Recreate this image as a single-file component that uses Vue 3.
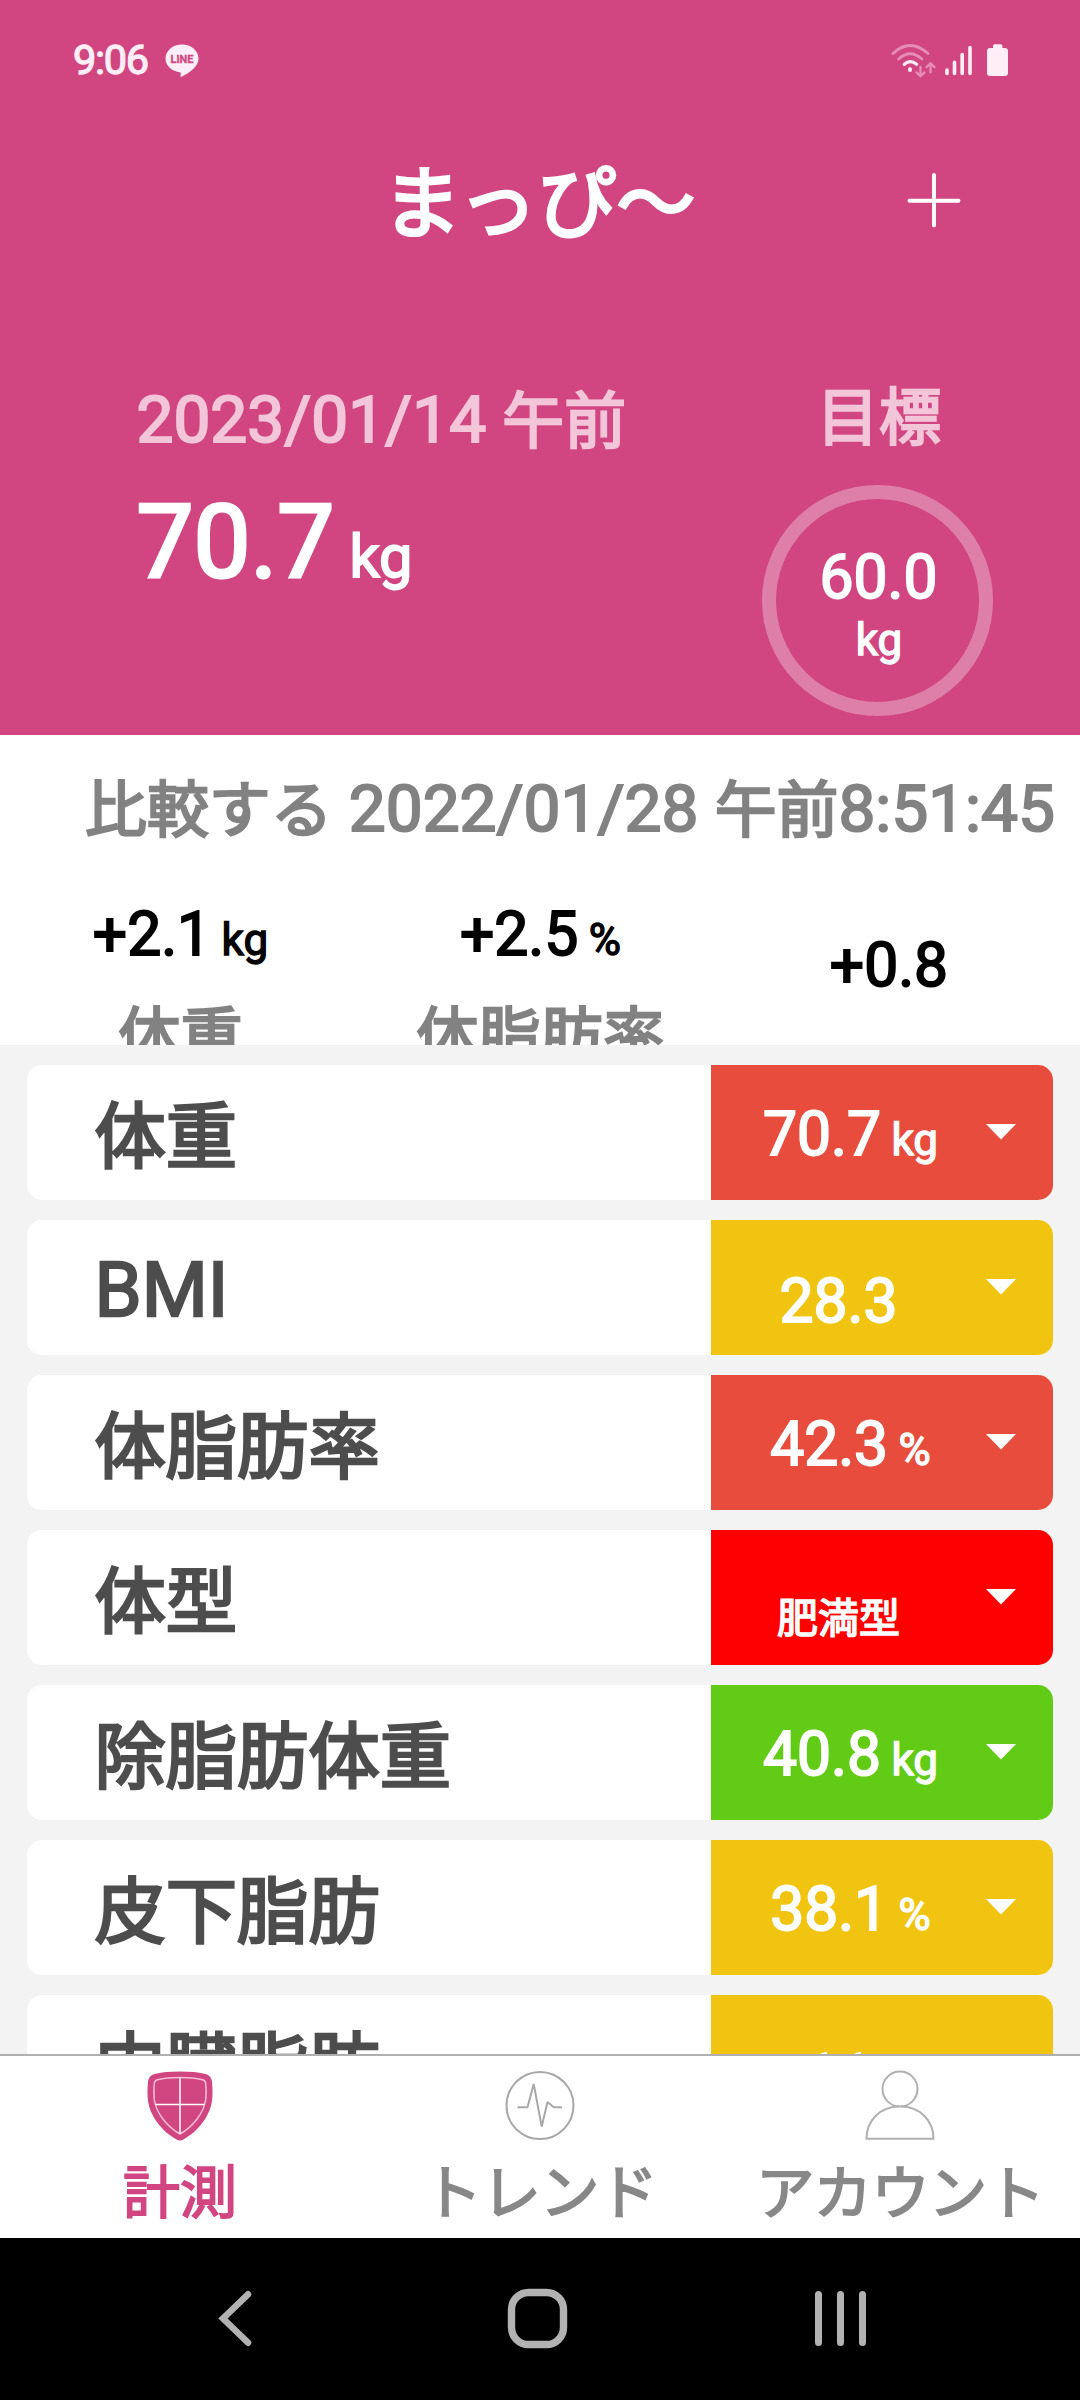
<script setup>
const stats = [
  { value: '+2.1', unit: 'kg', label: '体重' },
  { value: '+2.5', unit: '%', label: '体脂肪率' },
  { value: '+0.8', unit: '', label: '' }
]

const rows = [
  { label: '体重', value: '70.7', unit: 'kg', tone: 'high' },
  { label: 'BMI', latin: true, value: '28.3', unit: '', tone: 'warn' },
  { label: '体脂肪率', value: '42.3', unit: '%', tone: 'high' },
  { label: '体型', text: '肥満型', unit: '', tone: 'alert' },
  { label: '除脂肪体重', value: '40.8', unit: 'kg', tone: 'good' },
  { label: '皮下脂肪', value: '38.1', unit: '%', tone: 'warn' },
  { label: '内臓脂肪', value: '11', unit: '', tone: 'warn' }
]
</script>

<template>
  <div class="phone">
    <header class="header">
      <div class="status">
        <span class="clock">9:06</span>
        <svg class="line" width="34" height="33" viewBox="0 0 34 33">
          <path d="M17 .5C8 .5.5 6.700.5 14.500c0 7 5.900 12.500 14 13.800 1.200.3 1.500.8 1.300 2l-.3 2c0 .6.400.8 1 .5C21 30.500 33.500 24 33.500 14.500 33.500 6.700 26 .5 17 .5z" fill="#ffeef6" />
          <text x="17" y="19" text-anchor="middle" textLength="23" lengthAdjust="spacingAndGlyphs" class="line-word">LINE</text>
        </svg>
        <svg class="signals" width="120" height="36" viewBox="890 42 120 36" fill="none" stroke-linecap="round">
          <g stroke="#e58db6" stroke-width="2.800">
            <path d="M893 53.500Q910 37.500 928 53.500" />
            <path d="M898.500 59Q910 48.500 922 59" />
            <path d="M920.500 67v9m-4-3.600 4 3.800 4-3.800M930.500 72.500v-9m-4 3.600 4-3.800 4 3.800" stroke-width="2.300" />
          </g>
          <path d="M904.300 64.300Q910 59 916.600 64.300" stroke="#ffeef6" stroke-width="3.200" />
          <ellipse cx="910" cy="69.500" rx="2" ry="2.500" fill="#ffeef6" />
          <path d="M947 70v3.500M954.500 62.300v11.200M962.200 54.500v19M970 47.500v26" stroke="#ffeef6" stroke-width="3.600" />
          <path d="M993 48v-2q0-1.700 1.700-1.700h6q1.700 0 1.700 1.700v2h2.300q3.300 0 3.300 3.300v21.400q0 3.300-3.300 3.300h-14.400q-3.300 0-3.300-3.300v-21.400q0-3.300 3.300-3.300z" fill="#ffeef6" />
        </svg>
      </div>

      <div class="titlebar">
        <h1 class="title">まっぴ〜</h1>
        <svg class="plus" width="56" height="56" viewBox="0 0 56 56">
          <path d="M28 2v50.400M3.500 27.700h49" stroke="#fff" stroke-width="3.900" stroke-linecap="round" />
        </svg>
      </div>

      <div class="summary">
        <div class="current">
          <div class="date">2023/01/14 <span class="cjk">午前</span></div>
          <div class="weight">70.7<span class="weight-unit">kg</span></div>
        </div>
        <div class="goal">
          <div class="goal-label"><span class="cjk">目標</span></div>
          <div class="ring">
            <div class="ring-value">60.0</div>
            <div class="ring-unit">kg</div>
          </div>
        </div>
      </div>
    </header>

    <section class="compare">
      <div class="compare-date"><span class="cjk">比較する</span> 2022/01/28 <span class="cjk">午前</span>8:51:45</div>
      <div class="stats">
        <div v-for="s in stats" :key="s.value" class="stat" :class="{ bare: !s.unit }">
          <div class="num">{{ s.value }}<span v-if="s.unit" class="unit">{{ s.unit }}</span></div>
          <div v-if="s.label" class="stat-label"><span class="cjk">{{ s.label }}</span></div>
        </div>
      </div>
    </section>

    <main class="list">
      <div v-for="r in rows" :key="r.label" class="row">
        <div class="row-label"><span :class="{ cjk: !r.latin }">{{ r.label }}</span></div>
        <div class="badge" :class="r.tone">
          <div class="num badge-value" :class="{ bare: !r.unit }">
            <span v-if="r.text" class="badge-text">{{ r.text }}</span>
            <template v-else>{{ r.value }}<span v-if="r.unit" class="unit">{{ r.unit }}</span></template>
          </div>
          <svg class="caret" width="30" height="16" viewBox="0 0 30 16"><path d="M0 0h30L15 15.500z" fill="#fff" /></svg>
        </div>
      </div>
    </main>

    <nav class="tabs">
      <div class="tab active">
        <svg width="70" height="72" viewBox="0 0 70 72">
          <path d="M35 1.500c10 0 18 .8 24.500 2.300 4.500 1 7 3.400 7.500 8 .5 6 .8 11.500.2 17.500C65.500 46 53 61.500 38.500 69.500q-3.500 2-7 0C17 61.500 4.500 46 2.800 29.300 2.200 23.300 2.500 17.800 3 11.800c.5-4.600 3-7 7.500-8C17 2.300 25 1.500 35 1.500z" fill="#d14681" />
          <path d="M35 7.500c9 0 16 .7 22.500 2.300 2 .5 3 1.600 3.200 3.700.6 6 .6 10.500.1 15.500C59 43 48 56.500 35 64 22 56.500 11 43 9.200 29c-.5-5-.5-9.500.1-15.500.2-2.100 1.200-3.200 3.200-3.700C19 8.200 26 7.500 35 7.500z" fill="none" stroke="#f5bdd8" stroke-width="1.500" />
          <path d="M35 8v55.500M10.500 34.500h49" stroke="#fff" stroke-width="1.500" />
        </svg>
        <span>計測</span>
      </div>
      <div class="tab">
        <svg width="70" height="72" viewBox="0 0 70 72" fill="none" stroke="#a8a8a8" stroke-width="2">
          <circle cx="35" cy="35.500" r="33.500" />
          <path d="M12.500 37.200h10L28.700 14l8 42.500L42.500 32l6.300 5.200H57" stroke-linejoin="bevel" />
        </svg>
        <span class="kana wide">トレンド</span>
      </div>
      <div class="tab">
        <svg width="70" height="72" viewBox="0 0 70 72" fill="none" stroke="#b0b0b0" stroke-width="2">
          <circle cx="35" cy="19" r="17.500" />
          <path d="M34 36.500C15.500 36.500 1.500 50.500 1.500 68.700h67C68.500 50.500 54.500 36.500 36 36.500" />
        </svg>
        <span class="kana">アカウント</span>
      </div>
    </nav>

    <footer class="sysnav">
      <svg width="1080" height="162" viewBox="0 2238 1080 162" fill="none" stroke="#b2b2b2" stroke-linecap="round">
        <path d="M248 2294.300 223 2318.500l25 24.200" stroke-width="6.500" stroke-linejoin="miter" />
        <rect x="511.500" y="2292.500" width="52" height="52" rx="17" stroke-width="7.400" />
        <path d="M818.500 2294.500v48M840.500 2294.500v48M862.500 2294.500v48" stroke-width="7" />
      </svg>
    </footer>
  </div>
</template>

<style>
body {
  margin: 0;
  background: #000;
}
</style>

<style scoped>
.phone {
  width: 1080px;
  height: 2400px;
  display: flex;
  flex-direction: column;
  overflow: hidden;
  background: #f3f3f3;
  font-family: Roboto, "Noto Sans CJK JP", sans-serif;
  font-weight: 400;
  white-space: nowrap;
  -webkit-text-stroke: 0.031em;
}
.phone * {
  box-sizing: border-box;
}
.phone svg {
  display: block;
  flex: none;
}
.phone div,
.phone span,
.phone h1 {
  -webkit-text-stroke-width: 0.031em;
}
.phone .cjk {
  font-size: 0.942em;
  line-height: 0;
  vertical-align: -0.012em;
  -webkit-text-stroke-width: 0.038em;
}

/* header */
.header {
  height: 735px;
  flex: none;
  background: #d14681;
  color: #fff;
}
.status {
  height: 120px;
  display: flex;
  align-items: center;
  padding: 0 70px 0 73px;
}
.clock {
  font-size: 41.5px;
  letter-spacing: -1.3px;
  line-height: 48px;
  color: #ffeef6;
  width: 92px;
}
.line-word {
  font-family: Roboto, sans-serif;
  font-size: 11px;
  font-weight: 700;
  fill: #d14681;
  stroke: #d14681;
  stroke-width: 0.3px;
  -webkit-text-stroke-width: 0;
}
.signals {
  margin-left: auto;
}
.titlebar {
  height: 265px;
  display: flex;
  padding-left: 382.5px;
}
.title {
  margin: 0;
  padding-top: 35px;
  width: 523.5px;
  font-size: 79px;
  line-height: 100px;
  font-weight: 400;
}
.phone .title {
  -webkit-text-stroke-width: 0.038em;
}
.plus {
  margin-top: 52.5px;
}
.summary {
  display: flex;
}
.current {
  flex: none;
  width: 762px;
  padding-left: 136.5px;
}
.date,
.goal-label {
  font-size: 66px;
  line-height: 70px;
  color: #f2c5d9;
}
.date {
  font-size: 65.7px;
}
.weight {
  margin-top: 33px;
  font-size: 101.5px;
  line-height: 110px;
}
.weight-unit {
  margin-left: 15px;
  font-size: 59.5px;
  line-height: 0;
}
.goal {
  flex: none;
  width: 231px;
  display: flex;
  flex-direction: column;
  align-items: center;
}
.goal-label {
  margin: -3px 0 0 3px;
}
.ring {
  margin-top: 32.5px;
  width: 231px;
  height: 231px;
  padding-top: 49.5px;
  border: 14px solid #de7fa9;
  border-radius: 50%;
  text-align: center;
}
.ring-value {
  padding-left: 2px;
  font-size: 60.5px;
  line-height: 60px;
}
.ring-unit {
  margin-top: 8.5px;
  padding-left: 3px;
  font-size: 44px;
  line-height: 46px;
}

/* comparison */
.compare {
  height: 310px;
  flex: none;
  padding-top: 33.5px;
  overflow: hidden;
  background: #fff;
}
.compare-date {
  padding-left: 85px;
  font-size: 65.7px;
  line-height: 80px;
  color: #828282;
}
.stats {
  display: flex;
  margin-top: 56px;
  padding-left: 0.5px;
}
.stat {
  flex: none;
  width: 360px;
  text-align: center;
}
.stat.bare {
  padding: 31px 23px 0 0;
}
.num {
  font-size: 60.5px;
  line-height: 60px;
  color: #000;
}
.unit {
  margin-left: 10.5px;
  font-size: 44px;
  line-height: 0;
}
.stat-label {
  margin-top: 36px;
  font-size: 66px;
  line-height: 70px;
  color: #828282;
}

/* measurements */
.list {
  height: 1009px;
  flex: none;
  display: flex;
  flex-direction: column;
  gap: 20px;
  padding: 20px 27px 0;
  overflow: hidden;
}
.row {
  height: 135px;
  flex: none;
  display: flex;
  overflow: hidden;
  border-radius: 15px;
  background: #fff;
}
.row-label {
  width: 684px;
  padding: 20px 0 0 67.5px;
  font-size: 75.7px;
  line-height: 100px;
  color: #4d4d4d;
}
.badge {
  width: 342px;
  display: flex;
}
.high { background: #e74c3c; }
.warn { background: #f0c410; }
.alert { background: #ff0000; }
.good { background: #62cb16; }
.badge-value {
  width: 279px;
  padding-top: 40px;
  text-align: center;
  color: #fff;
}
.badge-value.bare {
  padding: 51.5px 24px 0 0;
}
.phone .badge-text {
  font-size: 41px;
  line-height: 0;
  vertical-align: -1px;
  -webkit-text-stroke-width: 0.038em;
}
.caret {
  margin: 59px 0 0 -4.5px;
}

/* tab bar */
.tabs {
  height: 184px;
  flex: none;
  display: flex;
  border-top: 2px solid #b0b0b0;
  background: #fff;
}
.tab {
  width: 360px;
  display: flex;
  flex-direction: column;
  align-items: center;
  padding-top: 13.5px;
  font-size: 57px;
  line-height: 80px;
  color: #888;
}
.tab span {
  margin-top: 12px;
}
.tab .kana {
  font-size: 58.5px;
  letter-spacing: -0.9px;
}
.tab .wide {
  font-size: 59.5px;
}
.tab.active {
  color: #d14681;
}

.sysnav {
  height: 162px;
  flex: none;
  background: #000;
}
</style>
